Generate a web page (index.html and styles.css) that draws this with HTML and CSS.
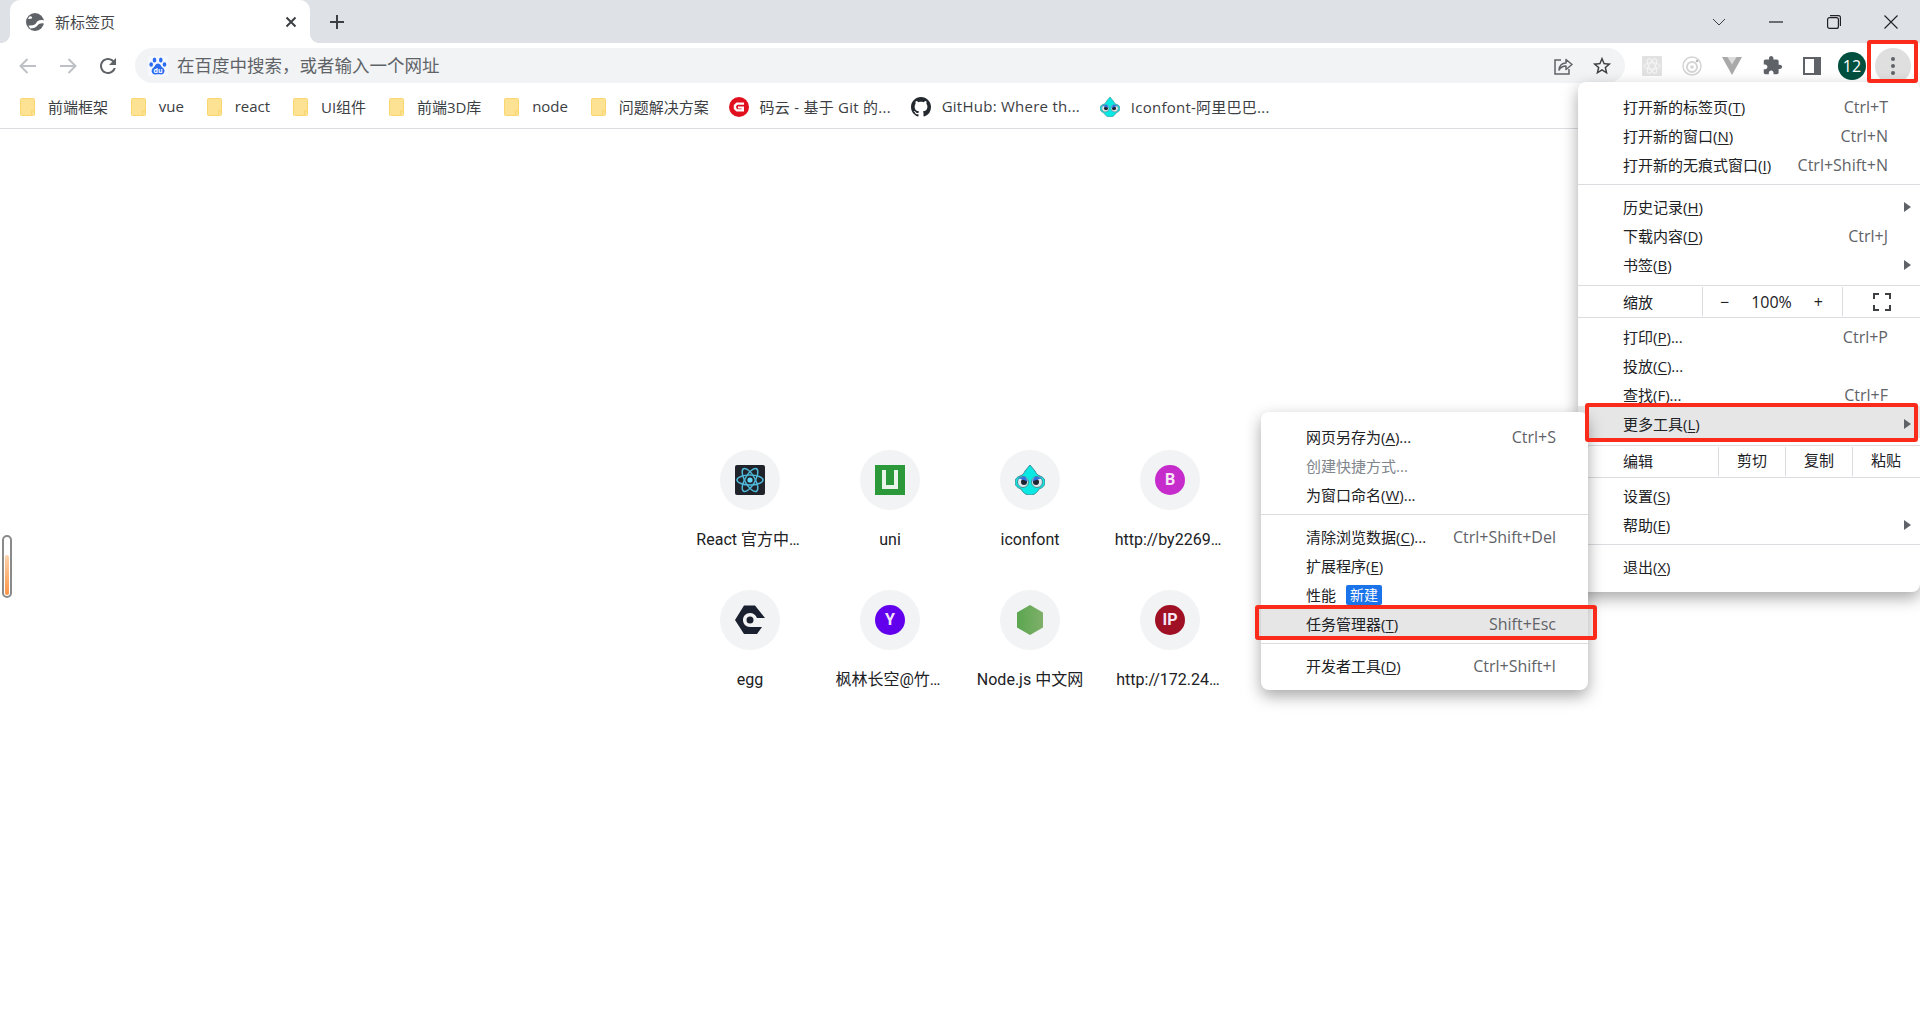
FILE: index.html
```html
<!DOCTYPE html>
<html>
<head>
<title>新标签页</title>
<meta charset="UTF-8">
<link rel="stylesheet" href="styles.css">
</head>
<body>
<div class="tabstrip">
    <div class="tab">
        <svg class="tabicon" viewBox="0 0 18 18"><circle cx="9" cy="9" r="9" fill="#5f6368"/><path d="M18 7.500C14 6.500 11.500 7.500 10.500 9.500 9.500 11.500 7 13 2.500 12.500L4 15.500C7.500 15.500 10 14.500 11.500 12.500 13 10.500 15 10 18 10.500Z" fill="#fff"/><path d="M3.500 3.500C5 3 6.500 4 6 5 5.500 6 3.500 6 1.800 5.800Z" fill="#fff"/></svg>
        <span class="tabtitle">新标签页</span>
        <svg class="tabclose" viewBox="0 0 12 12"><path d="M1.500 1.500L10.500 10.500M10.500 1.500L1.500 10.500" stroke="#3c4043" stroke-width="2"/></svg>
    </div>
    <svg class="newtab" viewBox="0 0 16 16"><path d="M8 1V15M1 8H15" stroke="#3c4043" stroke-width="2"/></svg>
    <div class="winbtns">
        <div class="winbtn"><svg width="14" height="8" viewBox="0 0 14 8"><path d="M1 1L7 7L13 1" fill="none" stroke="#3c4043" stroke-width="1"/></svg></div>
        <div class="winbtn"><svg width="14" height="2" viewBox="0 0 14 2"><path d="M0 1H14" stroke="#202124" stroke-width="1.200"/></svg></div>
        <div class="winbtn"><svg width="14" height="14" viewBox="0 0 14 14"><rect x="0.600" y="2.600" width="10.800" height="10.800" rx="2" fill="none" stroke="#202124" stroke-width="1.200"/><path d="M3 0.600H11.500C12.600 0.600 13.400 1.400 13.400 2.500V11" fill="none" stroke="#202124" stroke-width="1.200"/></svg></div>
        <div class="winbtn"><svg width="14" height="14" viewBox="0 0 14 14"><path d="M0.500 0.500L13.500 13.500M13.500 0.500L0.500 13.500" stroke="#202124" stroke-width="1.100"/></svg></div>
    </div>
</div>

<div class="toolbar">
    <div class="toolbtn"><svg width="20" height="20" viewBox="0 0 20 20"><path d="M18 10H3M9.500 3L2.500 10L9.500 17" fill="none" stroke="#bdc1c6" stroke-width="2"/></svg></div>
    <div class="toolbtn"><svg width="20" height="20" viewBox="0 0 20 20"><path d="M2 10H17M10.500 3L17.500 10L10.500 17" fill="none" stroke="#bdc1c6" stroke-width="2"/></svg></div>
    <div class="toolbtn"><svg width="24" height="24" viewBox="0 0 24 24"><path fill="#5f6368" d="M17.650 6.350C16.200 4.900 14.210 4 12 4c-4.420 0-7.990 3.580-7.990 8s3.570 8 7.990 8c3.730 0 6.840-2.550 7.730-6h-2.080c-.82 2.330-3.040 4-5.650 4-3.310 0-6-2.690-6-6s2.690-6 6-6c1.660 0 3.140.69 4.220 1.780L13 11h7V4l-2.350 2.350z"/></svg></div>
    <div class="omnibox">
        <svg class="baidu" viewBox="0 0 20 20"><rect width="20" height="20" fill="#f5f8ff"/><g fill="#2b6cf0"><ellipse cx="6.500" cy="4" rx="1.800" ry="2.500"/><ellipse cx="12.800" cy="4" rx="1.800" ry="2.500"/><ellipse cx="3.200" cy="8.500" rx="1.800" ry="2.300"/><ellipse cx="16.500" cy="8.500" rx="1.800" ry="2.300"/><path d="M10 7.500C7.500 7.500 7 10.500 5 12 3 13.500 3 18 7 18.500 8.500 18.700 11 18 13 18.500 17 18.500 17.500 13.500 15 12 13 10.500 12.500 7.500 10 7.500Z"/></g><text x="10" y="17" class="baidutext">du</text></svg>
        <span class="omnitext">在百度中搜索，或者输入一个网址</span>
        <div class="omnibtn"><svg width="20" height="20" viewBox="0 0 20 20"><path d="M8 4H2V18H16V13" fill="none" stroke="#5f6368" stroke-width="1.500"/><path d="M6 14C6.500 9.500 9.500 7 13 7V3.500L19 8.500L13 13.500V10C10 10 7.500 11.500 6 14Z" fill="none" stroke="#5f6368" stroke-width="1.500" stroke-linejoin="round"/></svg></div>
        <div class="omnibtn"><svg width="22" height="22" viewBox="0 0 24 24"><path fill="#3c4043" d="M22 9.240l-7.190-.62L12 2 9.190 8.630 2 9.240l5.460 4.730L5.820 21 12 17.270 18.180 21l-1.630-7.030L22 9.240zM12 15.400l-3.760 2.270 1-4.280-3.320-2.880 4.380-.38L12 6.100l1.710 4.040 4.380.38-3.320 2.880 1 4.280L12 15.400z"/></svg></div>
    </div>
    <div class="toolicons">
        <div class="toolbtn"><svg width="20" height="20" viewBox="0 0 20 20"><rect width="20" height="20" rx="1" fill="#e2e2e2"/><g fill="none" stroke="#f6f6f6" stroke-width="1"><ellipse cx="10" cy="10" rx="8" ry="3.200"/><ellipse cx="10" cy="10" rx="8" ry="3.200" transform="rotate(60 10 10)"/><ellipse cx="10" cy="10" rx="8" ry="3.200" transform="rotate(120 10 10)"/></g></svg></div>
        <div class="toolbtn"><svg width="20" height="20" viewBox="0 0 20 20"><g fill="none" stroke="#d4d4d4"><circle cx="10" cy="10" r="9" stroke-width="1.500"/><circle cx="10" cy="11" r="5" stroke-width="2"/></g><circle cx="10" cy="11" r="1.800" fill="#d4d4d4"/><circle cx="15" cy="5" r="1.300" fill="#bbb"/></svg></div>
        <div class="toolbtn"><svg width="20" height="18" viewBox="0 0 20 18"><path d="M0 0H20L10 18Z" fill="#a9a9a9"/><path d="M5.500 0H14.500L10 7.500Z" fill="#dcdcdc"/></svg></div>
        <div class="toolbtn"><svg width="21" height="21" viewBox="0 0 24 24"><path fill="#5f6368" d="M20.500 11H19V7c0-1.100-.9-2-2-2h-4V3.500C13 2.120 11.880 1 10.500 1S8 2.120 8 3.500V5H4c-1.100 0-1.990.9-1.990 2v3.800H3.500c1.490 0 2.700 1.210 2.700 2.700s-1.210 2.700-2.700 2.700H2V20c0 1.100.9 2 2 2h3.800v-1.500c0-1.490 1.210-2.700 2.700-2.700 1.490 0 2.700 1.210 2.700 2.700V22H17c1.100 0 2-.9 2-2v-4h1.500c1.380 0 2.500-1.120 2.500-2.500S21.880 11 20.500 11z"/></svg></div>
        <div class="toolbtn"><svg width="18" height="18" viewBox="0 0 18 18"><rect width="18" height="18" fill="#5f6368"/><rect x="2" y="2" width="9" height="14" fill="#fff"/></svg></div>
        <div class="toolbtn"><div class="avatar">12</div></div>
        <div class="toolbtn"><div class="dots"><i></i><i></i><i></i></div></div>
    </div>
</div>

<div class="bookmarks">
    <div class="bm"><svg class="folder" viewBox="0 0 15 18"><path d="M1.500 0.500H13.500A1 1 0 0 1 14.500 1.500V13H11.500V17.500H1.500A1 1 0 0 1 0.500 16.500V1.500A1 1 0 0 1 1.500 0.500Z" fill="#fde293" stroke="#f9d66f"/><path d="M11.500 13H14.500V16.500A1 1 0 0 1 13.500 17.500H11.500Z" fill="#fde293" stroke="#f9d66f"/></svg><span>前端框架</span></div>
    <div class="bm"><svg class="folder" viewBox="0 0 15 18"><path d="M1.500 0.500H13.500A1 1 0 0 1 14.500 1.500V13H11.500V17.500H1.500A1 1 0 0 1 0.500 16.500V1.500A1 1 0 0 1 1.500 0.500Z" fill="#fde293" stroke="#f9d66f"/><path d="M11.500 13H14.500V16.500A1 1 0 0 1 13.500 17.500H11.500Z" fill="#fde293" stroke="#f9d66f"/></svg><span>vue</span></div>
    <div class="bm"><svg class="folder" viewBox="0 0 15 18"><path d="M1.500 0.500H13.500A1 1 0 0 1 14.500 1.500V13H11.500V17.500H1.500A1 1 0 0 1 0.500 16.500V1.500A1 1 0 0 1 1.500 0.500Z" fill="#fde293" stroke="#f9d66f"/><path d="M11.500 13H14.500V16.500A1 1 0 0 1 13.500 17.500H11.500Z" fill="#fde293" stroke="#f9d66f"/></svg><span>react</span></div>
    <div class="bm"><svg class="folder" viewBox="0 0 15 18"><path d="M1.500 0.500H13.500A1 1 0 0 1 14.500 1.500V13H11.500V17.500H1.500A1 1 0 0 1 0.500 16.500V1.500A1 1 0 0 1 1.500 0.500Z" fill="#fde293" stroke="#f9d66f"/><path d="M11.500 13H14.500V16.500A1 1 0 0 1 13.500 17.500H11.500Z" fill="#fde293" stroke="#f9d66f"/></svg><span>UI组件</span></div>
    <div class="bm"><svg class="folder" viewBox="0 0 15 18"><path d="M1.500 0.500H13.500A1 1 0 0 1 14.500 1.500V13H11.500V17.500H1.500A1 1 0 0 1 0.500 16.500V1.500A1 1 0 0 1 1.500 0.500Z" fill="#fde293" stroke="#f9d66f"/><path d="M11.500 13H14.500V16.500A1 1 0 0 1 13.500 17.500H11.500Z" fill="#fde293" stroke="#f9d66f"/></svg><span>前端3D库</span></div>
    <div class="bm"><svg class="folder" viewBox="0 0 15 18"><path d="M1.500 0.500H13.500A1 1 0 0 1 14.500 1.500V13H11.500V17.500H1.500A1 1 0 0 1 0.500 16.500V1.500A1 1 0 0 1 1.500 0.500Z" fill="#fde293" stroke="#f9d66f"/><path d="M11.500 13H14.500V16.500A1 1 0 0 1 13.500 17.500H11.500Z" fill="#fde293" stroke="#f9d66f"/></svg><span>node</span></div>
    <div class="bm"><svg class="folder" viewBox="0 0 15 18"><path d="M1.500 0.500H13.500A1 1 0 0 1 14.500 1.500V13H11.500V17.500H1.500A1 1 0 0 1 0.500 16.500V1.500A1 1 0 0 1 1.500 0.500Z" fill="#fde293" stroke="#f9d66f"/><path d="M11.500 13H14.500V16.500A1 1 0 0 1 13.500 17.500H11.500Z" fill="#fde293" stroke="#f9d66f"/></svg><span>问题解决方案</span></div>
    <div class="bm"><svg class="bmicon" viewBox="0 0 20 20"><circle cx="10" cy="10" r="10" fill="#e0101f"/><path d="M15 5.500H7.500L4.800 8V12L7.500 14.500H15V9.500H9V11.500H12.500V12.300H8.500L7.200 11V9L8.500 7.700H15Z" fill="#fff"/></svg><span class="wide">码云 - 基于 Git 的...</span></div>
    <div class="bm"><svg class="bmicon" viewBox="0 0 16 16"><path fill="#24292f" d="M8 0C3.580 0 0 3.580 0 8c0 3.540 2.290 6.530 5.470 7.590.4.070.55-.17.55-.38 0-.19-.01-.82-.01-1.490-2.010.37-2.530-.49-2.690-.94-.09-.23-.48-.94-.82-1.130-.28-.15-.68-.52-.01-.53.63-.01 1.080.58 1.230.82.72 1.210 1.870.87 2.330.66.07-.52.28-.87.51-1.070-1.780-.2-3.640-.89-3.640-3.950 0-.87.31-1.590.82-2.150-.08-.2-.36-1.020.08-2.120 0 0 .67-.21 2.200.82.64-.18 1.320-.27 2-.27s1.360.09 2 .27c1.530-1.040 2.200-.82 2.200-.82.44 1.100.16 1.920.08 2.120.51.56.82 1.270.82 2.150 0 3.070-1.870 3.750-3.650 3.950.29.25.54.73.54 1.480 0 1.070-.01 1.930-.01 2.200 0 .21.15.46.55.38A8.013 8.013 0 0016 8c0-4.420-3.580-8-8-8z"/></svg><span class="wide">GitHub: Where th...</span></div>
    <div class="bm"><svg class="bmicon" viewBox="0 0 30 30"><path d="M15 0L20 6C21 8 22 10 25 11C28 12 30 14 30 17C30 21 27 23 24 24C22 28 19 30 15 30C11 30 8 28 6 24C3 23 0 21 0 17C0 14 2 12 5 11C8 10 9 8 10 6Z" fill="#0be8e4" stroke="#3f8f96"/><circle cx="8" cy="17" r="5.500" fill="#dfe8ea" stroke="#3f8f96"/><circle cx="22" cy="17" r="5.500" fill="#dfe8ea" stroke="#3f8f96"/><circle cx="9" cy="17" r="3" fill="#1c2530"/><circle cx="21" cy="17" r="3" fill="#1c2530"/><path d="M3 13L13 16.500 10 11.500ZM27 13L17 16.500 20 11.500Z" fill="#2f6fe0"/></svg><span class="wide">Iconfont-阿里巴巴...</span></div>
</div>

<div class="ntp">
    <div class="grid">
        <div class="tile">
            <div class="tilecircle"><svg class="tileicon" viewBox="0 0 30 30"><rect width="30" height="30" rx="2" fill="#20232a"/><g fill="none" stroke="#4fb8d8" stroke-width="1.500"><ellipse cx="15" cy="15" rx="13" ry="5"/><ellipse cx="15" cy="15" rx="13" ry="5" transform="rotate(60 15 15)"/><ellipse cx="15" cy="15" rx="13" ry="5" transform="rotate(120 15 15)"/></g><circle cx="15" cy="15" r="2.600" fill="#61dafb"/></svg></div>
            <div class="tilelabel cut">React 官方中…</div>
        </div>
        <div class="tile">
            <div class="tilecircle"><svg class="tileicon" viewBox="0 0 30 30"><rect width="30" height="30" fill="#2b9939"/><path d="M7 5H11V20H19V5H23V24H7Z" fill="#e8f5e8"/></svg></div>
            <div class="tilelabel">uni</div>
        </div>
        <div class="tile">
            <div class="tilecircle"><svg class="tileicon" viewBox="0 0 30 30"><path d="M15 0L20 6C21 8 22 10 25 11C28 12 30 14 30 17C30 21 27 23 24 24C22 28 19 30 15 30C11 30 8 28 6 24C3 23 0 21 0 17C0 14 2 12 5 11C8 10 9 8 10 6Z" fill="#0be8e4" stroke="#3f8f96"/><circle cx="8" cy="17" r="5.500" fill="#dfe8ea" stroke="#3f8f96"/><circle cx="22" cy="17" r="5.500" fill="#dfe8ea" stroke="#3f8f96"/><circle cx="9" cy="17" r="3" fill="#1c2530"/><circle cx="21" cy="17" r="3" fill="#1c2530"/><path d="M3 13L13 16.500 10 11.500ZM27 13L17 16.500 20 11.500Z" fill="#2f6fe0"/></svg></div>
            <div class="tilelabel">iconfont</div>
        </div>
        <div class="tile">
            <div class="tilecircle"><div class="lettericon letterb">B</div></div>
            <div class="tilelabel cut">http://by2269…</div>
        </div>
        <div class="tile">
            <div class="tilecircle"><svg class="tileicon" viewBox="0 0 30 30"><path d="M9 0.500H20L30 13H22C20.500 9.500 18 8 15 8 11 8 8 11 8 15 8 19 11 22 15 22H27L22 29H9L0 15Z" fill="#1a2030"/><circle cx="15" cy="15" r="3.500" fill="#1a2030"/></svg></div>
            <div class="tilelabel">egg</div>
        </div>
        <div class="tile">
            <div class="tilecircle"><div class="lettericon lettery">Y</div></div>
            <div class="tilelabel cut">枫林长空@竹…</div>
        </div>
        <div class="tile">
            <div class="tilecircle"><svg class="tileicon" viewBox="0 0 30 30"><defs><linearGradient id="nodegreen" x1="0" x2="1" y1="0" y2="0"><stop offset="0" stop-color="#5aa64f"/><stop offset="1" stop-color="#7fb06a"/></linearGradient></defs><path d="M15 0L28 7.500V22.500L15 30L2 22.500V7.500Z" fill="url(#nodegreen)"/></svg></div>
            <div class="tilelabel">Node.js 中文网</div>
        </div>
        <div class="tile">
            <div class="tilecircle"><div class="lettericon letterip">IP</div></div>
            <div class="tilelabel cut">http://172.24…</div>
        </div>
    </div>
</div>

<div class="sidegauge"><div class="gaugefill"></div></div>

<!-- main chrome menu -->
<div class="menu mainmenu">
    <div class="row"><span>打开新的标签页(<u>T</u>)</span><span class="key">Ctrl+T</span></div>
    <div class="row"><span>打开新的窗口(<u>N</u>)</span><span class="key">Ctrl+N</span></div>
    <div class="row"><span>打开新的无痕式窗口(<u>I</u>)</span><span class="key">Ctrl+Shift+N</span></div>
    <div class="sep sepwide"></div>
    <div class="row more"><span>历史记录(<u>H</u>)</span></div>
    <div class="row"><span>下载内容(<u>D</u>)</span><span class="key">Ctrl+J</span></div>
    <div class="row more"><span>书签(<u>B</u>)</span></div>
    <div class="sep sepbar septop"></div>
    <div class="zoomrow">
        <span class="zoomname">缩放</span>
        <div class="zoomctl"><span>−</span><span>100%</span><span>+</span></div>
        <div class="zoomfull"><svg width="18" height="18" viewBox="0 0 18 18"><path d="M1 6V1H6M12 1H17V6M17 12V17H12M6 17H1V12" fill="none" stroke="#3c4043" stroke-width="2"/></svg></div>
    </div>
    <div class="sep sepbar"></div>
    <div class="row rowgap"><span>打印(<u>P</u>)...</span><span class="key">Ctrl+P</span></div>
    <div class="row"><span>投放(<u>C</u>)...</span></div>
    <div class="row"><span>查找(<u>F</u>)...</span><span class="key">Ctrl+F</span></div>
    <div class="row more hot"><span>更多工具(<u>L</u>)</span></div>
    <div class="sep sepbar sepedit"></div>
    <div class="editrow">
        <span class="editname">编辑</span>
        <span class="editbtn">剪切</span>
        <span class="editbtn">复制</span>
        <span class="editbtn">粘贴</span>
    </div>
    <div class="sep sepbar"></div>
    <div class="row rowgap2"><span>设置(<u>S</u>)</span></div>
    <div class="row more"><span>帮助(<u>E</u>)</span></div>
    <div class="sep sepwide"></div>
    <div class="row"><span>退出(<u>X</u>)</span></div>
</div>

<!-- more tools submenu -->
<div class="menu submenu">
    <div class="row"><span>网页另存为(<u>A</u>)...</span><span class="key">Ctrl+S</span></div>
    <div class="row off"><span>创建快捷方式...</span></div>
    <div class="row"><span>为窗口命名(<u>W</u>)...</span></div>
    <div class="sep sepwide"></div>
    <div class="row"><span>清除浏览数据(<u>C</u>)...</span><span class="key">Ctrl+Shift+Del</span></div>
    <div class="row"><span>扩展程序(<u>E</u>)</span></div>
    <div class="row"><span class="perf">性能<em class="badge">新建</em></span></div>
    <div class="row hot"><span>任务管理器(<u>T</u>)</span><span class="key">Shift+Esc</span></div>
    <div class="sep sepwide"></div>
    <div class="row"><span>开发者工具(<u>D</u>)</span><span class="key">Ctrl+Shift+I</span></div>
</div>

<!-- red annotation boxes -->
<div class="redbox boxdots"></div>
<div class="redbox boxmore"></div>
<div class="redbox boxtask"></div>
</body>
</html>
```

FILE: styles.css
```css
*{
    box-sizing: border-box;
}
html, body{
    height: 100%;
}
body{
    margin: 0;
    background-color: white;
    color: #202124;
    font-family: "Open Sans", "Noto Sans CJK SC", sans-serif;
    font-size: 15px;
    overflow: hidden;
}
svg{
    display: block;
    flex: none;
}

/* tab strip */
.tabstrip{
    display: flex;
    align-items: center;
    height: 43px;
    padding-left: 10px;
    background-color: #dee1e6;
}
.tab{
    position: relative;
    display: flex;
    align-items: center;
    width: 300px;
    height: 43px;
    padding: 0 13px 0 16px;
    background-color: white;
    border-radius: 10px 10px 0 0;
}
.tab::before, .tab::after{
    content: "";
    position: absolute;
    bottom: 0;
    width: 10px;
    height: 10px;
}
.tab::before{
    left: -10px;
    background: radial-gradient(circle at 0 0, #dee1e6 10px, white 10.5px);
}
.tab::after{
    right: -10px;
    background: radial-gradient(circle at 100% 0, #dee1e6 10px, white 10.5px);
}
.tabicon{
    width: 18px;
    height: 18px;
}
.tabtitle{
    margin-left: 11px;
    padding-bottom: 1px;
    color: #45474a;
}
.tabclose{
    width: 12px;
    height: 12px;
    margin-left: auto;
}
.newtab{
    width: 16px;
    height: 16px;
    margin-left: 19px;
}
.winbtns{
    display: flex;
    margin-left: auto;
    height: 36px;
}
.winbtn{
    display: flex;
    align-items: center;
    justify-content: center;
    width: 57.500px;
}

/* toolbar */
.toolbar{
    display: flex;
    align-items: center;
    height: 45px;
    padding: 0 8px;
}
.toolbtn{
    display: flex;
    align-items: center;
    justify-content: center;
    width: 40px;
    height: 40px;
}
.omnibox{
    display: flex;
    flex: 1;
    align-items: center;
    height: 35px;
    margin: 0 7px;
    padding: 0 4px 0 13px;
    background-color: #f1f3f4;
    border-radius: 18px;
}
.baidu{
    width: 20px;
    height: 20px;
}
.baidutext{
    fill: white;
    font-size: 7px;
    font-weight: bold;
    text-anchor: middle;
}
.omnitext{
    flex: 1;
    margin-left: 9px;
    padding-bottom: 2px;
    font-size: 17.500px;
    color: #5f6368;
}
.omnibtn{
    display: flex;
    align-items: center;
    justify-content: center;
    width: 39px;
    height: 35px;
}
.toolicons{
    display: flex;
}
.avatar{
    width: 28px;
    height: 28px;
    border-radius: 50%;
    background-color: #00503f;
    color: white;
    font-size: 16px;
    line-height: 28px;
    text-align: center;
}
.dots{
    display: flex;
    flex-direction: column;
    align-items: center;
    justify-content: center;
    gap: 3px;
    width: 36px;
    height: 36px;
    margin-left: 2px;
    border-radius: 50%;
    background-color: #dfdfdf;
}
.dots i{
    width: 4px;
    height: 4px;
    border-radius: 50%;
    background-color: #5f6368;
}

/* bookmarks bar */
.bookmarks{
    display: flex;
    align-items: center;
    gap: 19.800px;
    height: 41px;
    padding: 0 0 2px 17px;
    border-bottom: 1px solid #dadce0;
    color: #3c4043;
}
.bm{
    display: flex;
    align-items: center;
}
.bm span{
    padding-bottom: 2px;
}
.bm .wide{
    letter-spacing: 0.25px;
}
.folder{
    width: 15px;
    height: 18px;
    margin: 0 13px 0 3px;
}
.bmicon{
    width: 20px;
    height: 20px;
    margin-right: 11px;
}

/* new tab page shortcuts */
.ntp{
    display: flex;
    justify-content: center;
    padding-top: 321px;
}
.grid{
    display: grid;
    grid-template-columns: repeat(4, 140px);
    grid-auto-rows: 140px;
}
.tile{
    display: flex;
    flex-direction: column;
    align-items: center;
}
.tilecircle{
    display: flex;
    align-items: center;
    justify-content: center;
    width: 60px;
    height: 60px;
    border-radius: 50%;
    background-color: #f1f3f4;
}
.tileicon{
    width: 30px;
    height: 30px;
}
.tilelabel{
    margin-top: 20px;
    font-family: Roboto, "Noto Sans CJK SC", sans-serif;
    font-size: 16px;
    line-height: 20px;
    white-space: nowrap;
}
.cut{
    margin-right: 4px;
}
.lettericon{
    width: 30px;
    height: 30px;
    border-radius: 50%;
    color: #f6e6f6;
    font-family: Roboto, sans-serif;
    font-size: 16px;
    font-weight: bold;
    line-height: 30px;
    text-align: center;
}
.letterb{
    background-color: #c62bcb;
}
.lettery{
    background-color: #6200ee;
}
.letterip{
    background-color: #a01025;
}

/* thing stuck to the left edge */
.sidegauge{
    position: absolute;
    left: 2px;
    top: 535px;
    width: 10px;
    height: 63px;
    padding: 18px 1px 1px;
    border: 2px solid #8a8a8a;
    border-radius: 5px;
    background-color: white;
}
.gaugefill{
    height: 100%;
    border-radius: 2px;
    background: linear-gradient(#ffd3ad, #ff9445);
}

/* menus */
.menu{
    position: absolute;
    background-color: white;
    border-radius: 8px;
    box-shadow: 0 6px 16px rgba(0, 0, 0, 0.35);
    padding-top: 10px;
}
.mainmenu{
    left: 1578px;
    top: 82px;
    width: 342px;
    height: 510px;
}
.submenu{
    left: 1261px;
    top: 412px;
    width: 327px;
    height: 278px;
}
.row{
    position: relative;
    display: flex;
    align-items: center;
    justify-content: space-between;
    height: 29px;
    padding: 0 32px 0 45px;
    white-space: nowrap;
}
.row u{
    text-underline-offset: 2px;
}
.key{
    color: #5f6368;
    font-size: 16px;
}
.off{
    color: #80868b;
}
.rowgap{
    margin-top: 4px;
}
.rowgap2{
    margin-top: 3px;
}
.more::after{
    content: "";
    position: absolute;
    right: 9px;
    top: 10px;
    border-left: 7px solid #5f6368;
    border-top: 5px solid transparent;
    border-bottom: 5px solid transparent;
}
.hot{
    height: 32px;
    margin-top: -3px;
    padding-top: 3px;
    background-color: #e6e6e6;
}
.hot::after{
    top: 13px;
}
.sep{
    height: 1px;
    background-color: #dadce0;
}
.sepwide{
    margin: 5px 0 7px;
}
.septop{
    margin-top: 6px;
}
.sepedit{
    margin-top: 7px;
}
.zoomrow, .editrow{
    display: flex;
    align-items: center;
    height: 31px;
}
.zoomname{
    width: 124px;
    padding: 0 0 1px 45px;
}
.zoomctl{
    display: flex;
    align-items: center;
    justify-content: space-between;
    width: 141px;
    height: 29px;
    padding: 0 19px 0 17px;
    border-left: 1px solid #dadce0;
    border-right: 1px solid #dadce0;
    font-size: 16px;
}
.zoomfull{
    display: flex;
    justify-content: center;
    width: 77px;
}
.editname{
    width: 140px;
    padding: 0 0 2px 45px;
}
.editbtn{
    width: 67px;
    height: 29px;
    border-left: 1px solid #dadce0;
    line-height: 27px;
    text-align: center;
}
.perf{
    display: flex;
    align-items: center;
}
.badge{
    width: 36px;
    height: 20px;
    margin-left: 10px;
    border-radius: 2px;
    background-color: #1a73e8;
    color: white;
    font-size: 14px;
    font-style: normal;
    line-height: 20px;
    text-align: center;
}

/* red marks drawn on the screenshot */
.redbox{
    position: absolute;
    border: 4px solid #fb2b1b;
    border-radius: 3px;
}
.boxdots{
    left: 1867px;
    top: 40px;
    width: 51px;
    height: 43px;
}
.boxmore{
    left: 1585px;
    top: 403px;
    width: 333px;
    height: 39px;
}
.boxtask{
    left: 1255px;
    top: 605px;
    width: 342px;
    height: 35px;
}
```
